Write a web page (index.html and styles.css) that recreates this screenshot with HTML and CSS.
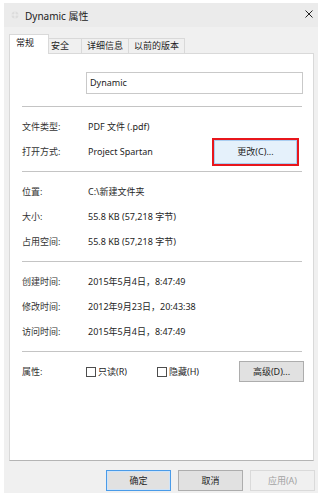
FILE: index.html
```html
<!DOCTYPE html>
<html>
<head lang="zh-CN">
    <meta charset="UTF-8">
    <title>Dynamic 属性</title>
    <link rel="stylesheet" href="styles.css">
</head>
<body>
    <div id="window">
        <div id="titlebar">
            <svg class="app-icon" width="8" height="8" viewBox="0 0 8 8">
                <circle cx="4" cy="4" r="3.5" fill="#dcdcdc"/>
                <path d="M0.5 4H7.5M4 0.5V7.5" stroke="#f4f4f4" stroke-width="0.8"/>
            </svg>
            <span class="title">Dynamic 属性</span>
            <svg class="close" width="8" height="8" viewBox="0 0 8 8">
                <path d="M0.5 0.5L7.5 7.5M7.5 0.5L0.5 7.5" stroke="#222" stroke-width="1"/>
            </svg>
        </div>

        <ul id="tabs">
            <li class="selected">常规</li>
            <li>安全</li>
            <li>详细信息</li>
            <li>以前的版本</li>
        </ul>

        <div id="panel">
            <div class="name-row">
                <div class="name-box">Dynamic</div>
            </div>
            <div class="line first"></div>

            <div class="row"><span class="label">文件类型:</span><span class="value">PDF 文件 (.pdf)</span></div>
            <div class="row">
                <span class="label">打开方式:</span><span class="value">Project Spartan</span>
                <span class="btn change">更改(C)...</span>
            </div>
            <div class="line"></div>

            <div class="row"><span class="label">位置:</span><span class="value">C:\新建文件夹</span></div>
            <div class="row"><span class="label">大小:</span><span class="value">55.8 KB (57,218 字节)</span></div>
            <div class="row"><span class="label">占用空间:</span><span class="value">55.8 KB (57,218 字节)</span></div>
            <div class="line"></div>

            <div class="row"><span class="label">创建时间:</span><span class="value">2015年5月4日，8:47:49</span></div>
            <div class="row"><span class="label">修改时间:</span><span class="value">2012年9月23日，20:43:38</span></div>
            <div class="row"><span class="label">访问时间:</span><span class="value">2015年5月4日，8:47:49</span></div>
            <div class="line"></div>

            <div class="row">
                <span class="label">属性:</span>
                <span class="check readonly"><i></i>只读(R)</span>
                <span class="check"><i></i>隐藏(H)</span>
                <span class="btn advanced">高级(D)...</span>
            </div>
        </div>

        <div id="footer">
            <span class="btn default">确定</span>
            <span class="btn">取消</span>
            <span class="btn disabled">应用(A)</span>
        </div>
    </div>
</body>
</html>
```

FILE: styles.css
```css
*{
    margin: 0;
    padding: 0;
}
ul{
    list-style: none;
}
body{
    background: #fff;
    font-family: "Noto Sans", "Noto Sans CJK SC", sans-serif;
    font-size: 9px;
    color: #1e1e1e;
}
#window{
    width: 314px;
    height: 490px;
    margin: 3px 4px;
    background: #f0f0f0;
    display: flex;
    flex-direction: column;
}
#titlebar{
    height: 24px;
    background: #ebebeb;
    display: flex;
    align-items: center;
    padding: 0 5px 0 7px;
}
#titlebar .app-icon{
    margin-right: 6px;
}
#titlebar .title{
    flex: 1;
    font-size: 10px;
    color: #222;
}
#titlebar .close{
    margin-top: -3px;
}
#tabs{
    display: flex;
    align-items: flex-end;
    padding: 7px 0 0 5px;
}
#tabs li{
    height: 14px;
    line-height: 14px;
    padding: 0 5px;
    border: 1px solid #d9d9d9;
    border-bottom: none;
    margin-left: -1px;
    background: #f0f0f0;
}
#tabs li.selected{
    height: 19px;
    line-height: 16px;
    padding: 0 14px 0 6px;
    margin-left: 0;
    margin-bottom: -1px;
    background: #fff;
    position: relative;
    z-index: 1;
}
#tabs li:nth-child(2){
    padding: 0 12px 0 2px;
}
#panel{
    height: 408px;
    box-sizing: border-box;
    margin: 0 4px 0 5px;
    background: #fff;
    border: 1px solid #d9d9d9;
    border-bottom-color: #b4b4b4;
    padding: 18px 11px 0 12px;
}
.name-row{
    display: flex;
    padding-left: 64px;
}
.name-box{
    flex: 1;
    height: 22px;
    line-height: 20px;
    box-sizing: border-box;
    border: 1px solid #c9c9c9;
    padding-left: 3px;
    margin-right: -1px;
    color: #222;
}
.line{
    height: 1px;
    background: #c4c4c4;
    margin: 7px 0;
}
.line.first{
    margin-top: 12px;
}
.row{
    height: 25px;
    display: flex;
    align-items: center;
}
.label{
    width: 66px;
    color: #333;
}
.value{
    flex: 1;
}
.btn{
    display: flex;
    align-items: center;
    justify-content: center;
    height: 21px;
    box-sizing: border-box;
    background: #e1e1e1;
    border: 1px solid #adadad;
    color: #1e1e1e;
}
.btn.change{
    width: 83px;
    height: 24px;
    margin-right: 5px;
    background: #e5f1fb;
    border-color: #a9cdf0;
    outline: 2px solid #e8161c;
}
.check{
    display: flex;
    align-items: center;
    width: 71px;
}
.check.readonly{
    margin-left: -2px;
}
.check i{
    width: 8px;
    height: 8px;
    border: 1px solid #4d4d4d;
    margin-right: 2px;
}
.btn.advanced{
    width: 65px;
    margin-left: auto;
    margin-right: -2px;
}
#footer{
    display: flex;
    justify-content: flex-end;
    gap: 7px;
    padding: 9px 3px 0 0;
}
#footer .btn{
    width: 65px;
    height: 21px;
}
#footer .btn.default{
    border: 1px solid #4a9be8;
    box-shadow: inset 0 0 0 1px #cfe4f9;
}
#footer .btn.disabled{
    background: #f0f0f0;
    border-color: #dadada;
    color: #a3a3a3;
}
```
